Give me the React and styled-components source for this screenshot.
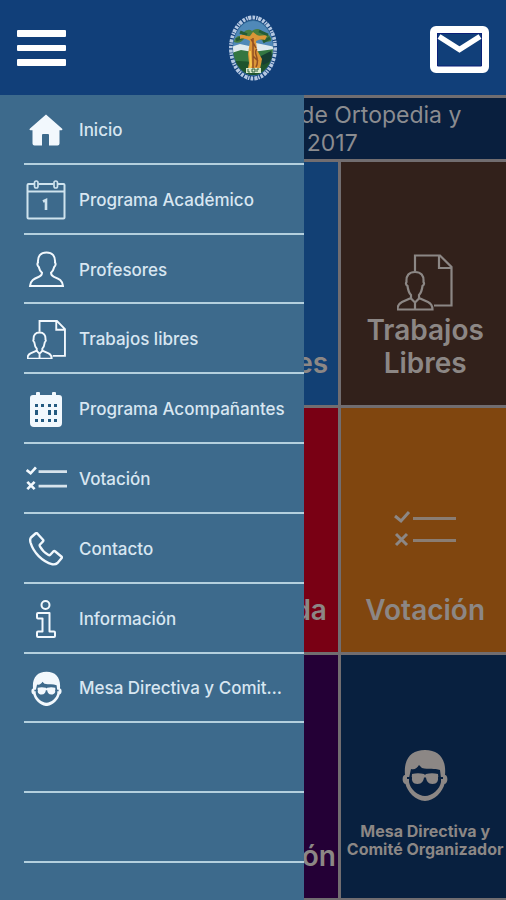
import React from "react";
import styled, { createGlobalStyle } from "styled-components";

const GlobalStyle = createGlobalStyle`
  *, *::before, *::after { box-sizing: border-box; }
  body {
    margin: 0;
    background: #7a7574;
    font-family: Inter, Roboto, "Liberation Sans", sans-serif;
  }
`;

const Page = styled.div`
  display: flex;
  flex-direction: column;
  min-height: 100vh;
`;

const Header = styled.header`
  display: flex;
  align-items: center;
  justify-content: space-between;
  height: 95px;
  padding: 0 17px;
  background: #113f79;
`;

const HeaderButton = styled.button`
  display: flex;
  justify-content: ${(p) => (p.$end ? "flex-end" : "flex-start")};
  width: 60px;
  padding: 0;
  border: 0;
  background: none;
  color: #fff;
  cursor: pointer;
`;

const Body = styled.div`
  position: relative;
  display: flex;
  flex: 1;
  overflow: hidden;
`;

const Board = styled.main`
  display: grid;
  flex: 1;
  grid-template-columns: repeat(3, minmax(0, 1fr));
  grid-template-rows: auto repeat(3, minmax(240px, 1fr));
  gap: 3px;
  margin-right: -3px;
  padding: 3px 0 2px;
  background: #716d70;
`;

const Banner = styled.h1`
  grid-column: 1 / -1;
  margin: 0;
  padding: 3px 0 2px 59%;
  background: #091f3e;
  color: #8b8c90;
  font-size: 23px;
  font-weight: 400;
  line-height: 28px;
  white-space: pre;
`;

const Tile = styled.a`
  display: flex;
  flex-direction: column;
  justify-content: flex-end;
  align-items: center;
  padding-bottom: 25px;
  background: ${(p) => p.$color};
  color: #8c8785;
  text-decoration: none;
`;

const TileIcon = styled.span`
  display: flex;
  align-items: center;
  justify-content: center;
  height: 64px;
`;

const TileLabel = styled.span`
  display: flex;
  align-items: ${(p) => (p.$small ? "center" : "flex-end")};
  height: 66px;
  font-size: ${(p) => (p.$small ? "16px" : "28px")};
  font-weight: ${(p) => (p.$small ? 700 : 600)};
  line-height: ${(p) => (p.$small ? "18px" : "33px")};
  text-align: center;
  white-space: pre;
`;

const Drawer = styled.nav`
  position: absolute;
  inset: 0 auto 0 0;
  width: 60%;
  padding: 0 0 37px 24px;
  background: #3d6a8c;
`;

const MenuList = styled.ul`
  display: grid;
  grid-template-columns: minmax(0, 1fr);
  grid-auto-rows: 1fr;
  height: 100%;
  margin: 0;
  padding: 0;
  list-style: none;
`;

const MenuItem = styled.li`
  display: flex;
  border-bottom: 2px solid #b4d0de;
`;

const MenuLink = styled.a`
  display: flex;
  align-items: center;
  gap: 11px;
  flex: 1;
  min-width: 0;
  padding: 2px 17px 0 0;
  color: #d8e6f1;
  font-size: 17px;
  font-weight: 500;
  line-height: 24px;
  text-decoration: none;
`;

const MenuIcon = styled.span`
  display: flex;
  flex: none;
  align-items: center;
  justify-content: center;
  width: 44px;
  color: #f2f8fd;
`;

const MenuText = styled.span`
  overflow: hidden;
  text-overflow: ellipsis;
  white-space: nowrap;
`;

const BurgerIcon = () => (
  <svg width="49" height="36" viewBox="0 0 49 36" fill="currentColor" aria-hidden="true">
    <rect y="0" width="49" height="7" rx="1" />
    <rect y="15" width="49" height="6" rx="1" />
    <rect y="29" width="49" height="7" rx="1" />
  </svg>
);

const MailIcon = () => (
  <svg width="59" height="51" viewBox="0 0 59 51" fill="none" stroke="currentColor" aria-hidden="true">
    <rect x="3.500" y="7.500" width="52" height="40" rx="2.500" strokeWidth="7" />
    <path d="M7.500 11.500h44v32.500h-44z" stroke="#0a1f78" strokeWidth="1" />
    <path d="M9 14.500 29.500 27.500 50 14.500" strokeWidth="5.500" />
  </svg>
);

const Crest = () => (
  <svg width="54" height="70" viewBox="0 0 54 70" role="img" aria-label="SDOT">
    <defs>
      <clipPath id="crest-clip">
        <ellipse cx="27" cy="35" rx="20" ry="27" />
      </clipPath>
    </defs>
    <ellipse cx="27" cy="35" rx="22" ry="30.500" fill="none" stroke="#b5c8e2" strokeWidth="4" strokeDasharray="2.600 1.100 1.500 .7 3.200 1.200" />
    <ellipse cx="27" cy="35" rx="20.500" ry="28" fill="#326b98" />
    <g clipPath="url(#crest-clip)">
      <path d="M5 5h44v28H5z" fill="#5089b8" />
      <path d="M5 34l9-3 9 2 7-3 19 4v6H5z" fill="#dfe9ed" />
      <path d="M5 40l10-3 12 2 22-3v30H5z" fill="#347641" />
      <path d="M5 49c13-3 21 3 43-1v18H5z" fill="#1e532d" />
      <path d="M33 44l12-6 2 9-10 5z" fill="#163e32" />
      <path d="M8 29c1-6 6-7 8-5 0-6 7-9 10-6 5-4 11-1 11 3 5-1 9 3 8 7-5 2-9 0-12-3-5 3-10 1-14-1-2 5-7 7-11 5z" fill="#477d3f" />
      <path d="M14 19l7 3M33 18l9 4M10 27l8-3M37 29l7-4" stroke="#245c36" strokeWidth="3" />
    </g>
    <path d="M14 22c5-1 7 2 10 1l3-4 4 3c3 2 7-1 10 1l-2 4c-4-1-7 0-9 1l1 9 5 9-2 10-4 4h-9l2-10-1-9 2-13c-3-2-6-3-10-2z" fill="#dc9637" />
    <path d="M27 25v31m4-20c-5 4 4 9-1 18m-5-28 5 9m-3 8 5 5" fill="none" stroke="#914f23" strokeWidth="1.500" />
    <path d="M24 38l1 14-2 6" fill="none" stroke="#f6c84c" strokeWidth="2" />
    <path d="M20 55h15v5H20z" fill="#d9e9cd" />
    <path d="M22 56v3h2m2-3v3h3v-3zm5 3v-3h2" fill="none" stroke="#2d613c" />
  </svg>
);

const HomeIcon = () => (
  <svg width="34" height="32" viewBox="0 0 34 32" fill="currentColor" aria-hidden="true">
    <path d="M17 .5 1 14.500c-1 1-.5 1.700.5 1.700H3.500V29.500q0 2 2 2H13V21q0-1 1-1h5q1 0 1 1v10.500h8.500q2 0 2-2V16.200h2c1 0 1.300-.8.4-1.600z" />
  </svg>
);

const CalendarOneIcon = () => (
  <svg width="40" height="40" viewBox="0 0 40 40" fill="none" stroke="#cfe3ee" aria-hidden="true">
    <path d="M8 4H2.500q-1 0-1 1v32.500q0 1 1 1h35q1 0 1-1V5q0-1-1-1H32M12.500 4h15M1.500 11.500h37" strokeWidth="2" />
    <rect x="8.500" y="1" width="3.500" height="7" rx="1.700" strokeWidth="1.700" />
    <rect x="28" y="1" width="3.500" height="7" rx="1.700" strokeWidth="1.700" />
    <path d="M17 21.500 20 20v10" strokeWidth="2.600" />
  </svg>
);

const PersonIcon = ({ size = 37 }) => (
  <svg width={size} height={size} viewBox="0 0 37 37" fill="none" stroke="currentColor" strokeWidth="2" aria-hidden="true">
    <path d="M18.500 1.500c6 0 9 3.500 8.500 10 1 1 .7 3-.7 4.300-.7 3-1.800 4.700-3.300 6 0 2 .6 3 3 4 5 2 8.500 3.500 9 9.200H2c.5-5.700 4-7.200 9-9.200 2.400-1 3-2 3-4-1.500-1.300-2.600-3-3.300-6-1.400-1.300-1.700-3.300-.7-4.300-.5-6.500 2.500-10 8.500-10z" />
  </svg>
);

const PaperIcon = ({ width = 39 }) => (
  <svg width={width} viewBox="0 0 56 57" fill="none" stroke="currentColor" strokeWidth={width < 50 ? 2.700 : 2.200} aria-hidden="true">
    <path d="M18 17V1.500h25L54.500 13v38.500H37M42 1.500V14h12.500" />
    <path d="M18 18c6 0 9 3.500 8.500 10 1 1 .5 3-1 4-.5 4-1.500 7-3.500 9v3l9 4c3 1.500 4.500 4 4.500 7.500h-35c0-3.500 1.500-6 4.500-7.500l9-4v-3c-2-2-3-5-3.500-9-1.500-1-2-3-1-4C9 21.500 12 18 18 18z" />
    <path d="m13.500 44 4.500 4.500 4.500-4.500M18 48v8" />
  </svg>
);

const CalendarIcon = () => (
  <svg width="32" height="35" viewBox="0 0 32 35" aria-hidden="true">
    <path fill="currentColor" d="M3 3h3V1q0-1 1-1h2q1 0 1 1v2h12V1q0-1 1-1h2q1 0 1 1v2h3q3 0 3 3v25q0 4-4 4H4q-4 0-4-4V6q0-3 3-3z" />
    <path fill="#245a80" d="M5 12h3v3H5zm6 0h3v3h-3zm7 0h3v3h-3zm6 0h3v3h-3zM5 18h3v5H5zm13 0h3v5h-3zm6 0h3v5h-3zM5 27h3v3H5zm6 0h3v3h-3zm7 0h3v3h-3zm6 0h3v3h-3z" />
  </svg>
);

const ChecklistIcon = ({ width = 41 }) => (
  <svg width={width} viewBox="0 0 62 38" fill="none" stroke="currentColor" strokeWidth={width < 50 ? 4 : 3} aria-hidden="true">
    <path d="m1 6 6 5 8-9M2 24l11 11m0-11L2 35" />
    <path d="M19 8.500h43M19 30.500h43" opacity=".85" />
  </svg>
);

const PhoneIcon = () => (
  <svg width="34" height="34" viewBox="0 0 34 34" fill="none" stroke="currentColor" strokeWidth="2.400" strokeLinejoin="round" aria-hidden="true">
    <path d="M2 5.500 6.500 1.500q1-.8 2 .2l5.500 6q.8 1-.2 2L11 12.500q-.7.7 0 2 3 5.500 8.500 8.500 1 .5 1.800-.3l3-3.200q1-.8 2 0l6 5q1 .8.200 1.800L28.500 31q-2 1.800-5 1.300C13 29.500 4.500 20.500 1.500 10.500 1 8.500 1 6.700 2 5.500z" />
  </svg>
);

const InfoIcon = ({ height = 38 }) => (
  <svg height={height} viewBox="0 0 20 38" fill="none" stroke="currentColor" strokeWidth="2" strokeLinejoin="round" aria-hidden="true">
    <circle cx="9.500" cy="5" r="4" />
    <path d="M2 13h11.500v18.500H18q1 0 1 1V36q0 1-1 1H2q-1 0-1-1v-3.500q0-1 1-1h4.500v-13H2q-1 0-1-1V14q0-1 1-1z" />
  </svg>
);

const FaceIcon = ({ width = 31, hole }) => (
  <svg width={width} viewBox="0 0 46 53" aria-hidden="true">
    <path fill="currentColor" d="M23 1C9 1 1.500 10 3 26c-3 0-3.500 8 .5 9 1.500 7 10 17 19.500 17s18-10 19.500-17c4-1 3.500-9 .5-9C44.500 10 37 1 23 1z" />
    <path fill={hole} d="M9 20c4 1 6-1 8-4l3 3c6 1.500 13 0 18 2l1 8v4c-1 7-9 14-16 14S8 40 7 33v-4z" />
    <path fill="currentColor" d="M10 25q6-1.500 12 0l1 1 1-1q6-1.500 12 0c1 7-1 10-5.500 10S24.500 32 24 28.500h-2c-.5 3.500-2 6.500-6.500 6.500S9 32 10 25z" />
    <path stroke={hole} strokeWidth="2" d="M5 29h5M36 29h5" />
  </svg>
);

const menu = [
  { label: "Inicio", icon: <HomeIcon /> },
  { label: "Programa Académico", icon: <CalendarOneIcon /> },
  { label: "Profesores", icon: <PersonIcon /> },
  { label: "Trabajos libres", icon: <PaperIcon /> },
  { label: "Programa Acompañantes", icon: <CalendarIcon /> },
  { label: "Votación", icon: <ChecklistIcon /> },
  { label: "Contacto", icon: <PhoneIcon /> },
  { label: "Información", icon: <InfoIcon /> },
  { label: "Mesa Directiva y Comité Organizador", icon: <FaceIcon hole="#3d6a8c" /> },
  null,
  null,
];

const tiles = [
  { color: "#124074" },
  { color: "#124074", label: "Profesores", icon: <PersonIcon size={54} /> },
  { color: "#32211b", label: "Trabajos\nLibres", icon: <PaperIcon width={56} /> },
  { color: "#790014" },
  { color: "#790014", label: "Mi Agenda", icon: <ChecklistIcon width={62} /> },
  { color: "#80460f", label: "Votación", icon: <ChecklistIcon width={62} /> },
  { color: "#240036" },
  { color: "#240036", label: "Información", icon: <InfoIcon height={54} /> },
  { color: "#08203f", label: "Mesa Directiva y\nComité Organizador", small: true, icon: <FaceIcon width={46} hole="#08203f" /> },
];

export default function App() {
  return (
    <Page>
      <GlobalStyle />
      <Header>
        <HeaderButton aria-label="Menú"><BurgerIcon /></HeaderButton>
        <Crest />
        <HeaderButton aria-label="Mensajes" $end><MailIcon /></HeaderButton>
      </Header>
      <Body>
        <Board>
          <Banner>{"de Ortopedia y\n 2017"}</Banner>
          {tiles.map((tile, i) => (
            <Tile key={i} $color={tile.color} href="#">
              {tile.icon && <TileIcon>{tile.icon}</TileIcon>}
              {tile.label && <TileLabel $small={tile.small}>{tile.label}</TileLabel>}
            </Tile>
          ))}
        </Board>
        <Drawer aria-label="Menú principal">
          <MenuList>
            {menu.map((item, i) => (
              <MenuItem key={i}>
                {item && (
                  <MenuLink href="#">
                    <MenuIcon>{item.icon}</MenuIcon>
                    <MenuText>{item.label}</MenuText>
                  </MenuLink>
                )}
              </MenuItem>
            ))}
          </MenuList>
        </Drawer>
      </Body>
    </Page>
  );
}
